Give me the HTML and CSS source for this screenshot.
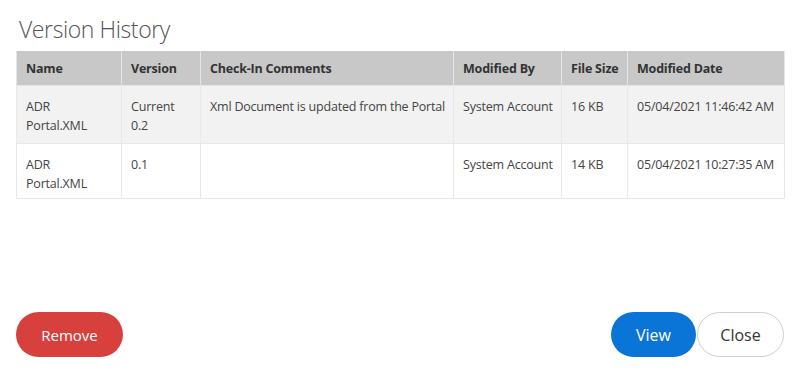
FILE: index.html
```html
<!DOCTYPE html>
<html lang="en">
<head>
    <meta charset="UTF-8">
    <meta name="viewport" content="width=device-width, initial-scale=1.0">
    <title>Version History</title>
    <link rel="stylesheet" href="styles.css">
</head>
<body>
    <div class="dialog">
        <h2 class="dialog-title">Version History</h2>
        <table class="versions">
            <colgroup>
                <col class="col-name">
                <col class="col-version">
                <col class="col-comments">
                <col class="col-by">
                <col class="col-size">
                <col class="col-date">
            </colgroup>
            <thead>
                <tr>
                    <th>Name</th>
                    <th>Version</th>
                    <th>Check-In Comments</th>
                    <th>Modified By</th>
                    <th>File Size</th>
                    <th>Modified Date</th>
                </tr>
            </thead>
            <tbody>
                <tr class="current">
                    <td class="name">ADR Portal.XML</td>
                    <td class="version">Current 0.2</td>
                    <td>Xml Document is updated from the Portal</td>
                    <td>System Account</td>
                    <td>16 KB</td>
                    <td>05/04/2021 11:46:42 AM</td>
                </tr>
                <tr>
                    <td class="name">ADR Portal.XML</td>
                    <td class="version">0.1</td>
                    <td></td>
                    <td>System Account</td>
                    <td>14 KB</td>
                    <td>05/04/2021 10:27:35 AM</td>
                </tr>
            </tbody>
        </table>
        <div class="dialog-footer">
            <button class="btn btn-danger">Remove</button>
            <div class="footer-right">
                <button class="btn btn-primary">View</button>
                <button class="btn btn-default">Close</button>
            </div>
        </div>
    </div>
</body>
</html>
```

FILE: styles.css
```css
body {
    margin: 0;
    font-family: "Open Sans", "Noto Sans", sans-serif;
    color: #333;
    background: #fff;
}
.dialog {
    height: 388px;
    box-sizing: border-box;
    padding: 14px 16px 31px 16px;
    display: flex;
    flex-direction: column;
}
.dialog-title {
    margin: 0 0 7px 3px;
    font-size: 23px;
    font-weight: 300;
    color: #555;
    line-height: 30px;
    letter-spacing: -0.4px;
}
.versions {
    width: 768px;
    border-collapse: collapse;
    table-layout: fixed;
    font-size: 12.5px;
    letter-spacing: -0.2px;
}
.col-name { width: 105px; }
.col-version { width: 79px; }
.col-comments { width: 253px; }
.col-by { width: 108px; }
.col-size { width: 66px; }
.col-date { width: 157px; }
.versions th {
    background: #c8c8c8;
    color: #333;
    font-weight: bold;
    text-align: left;
    white-space: nowrap;
    padding: 9px 2px 7px 9px;
    line-height: 18px;
    border: 1px solid #e6e6e6;
    border-top: none;
}
.versions td {
    vertical-align: top;
    white-space: nowrap;
    padding: 11px 2px 5px 9px;
    line-height: 19px;
    border: 1px solid #e8e8e8;
    color: #444;
}
.versions td.name,
.versions td.version {
    white-space: normal;
    padding-right: 16px;
}
.versions tr.current td {
    background: #f2f2f2;
    padding-bottom: 8px;
}
.dialog-footer {
    margin-top: auto;
    display: flex;
    justify-content: space-between;
    align-items: center;
}
.footer-right {
    display: flex;
    gap: 1px;
}
.btn {
    height: 45px;
    border-radius: 23px;
    font-family: "Open Sans", sans-serif;
    font-size: 15px;
    cursor: pointer;
    padding: 0;
}
.btn-danger {
    width: 107px;
    background: #d8403e;
    color: #fff;
    border: none;
}
.btn-primary {
    width: 85px;
    background: #0b74d7;
    color: #fff;
    border: none;
    font-size: 16px;
}
.btn-default {
    width: 87px;
    background: #fff;
    color: #333;
    border: 1px solid #cfcfcf;
    font-size: 16px;
}
```
